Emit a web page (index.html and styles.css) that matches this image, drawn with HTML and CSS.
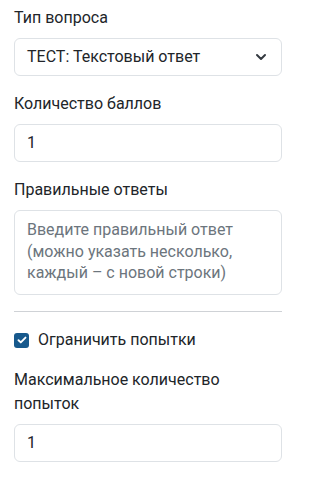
FILE: index.html
```html
<!DOCTYPE html>
<html lang="ru">
<head>
<meta charset="utf-8">
<link rel="stylesheet" href="styles.css">
</head>
<body>
<div class="panel">
  <div class="field">
    <label class="label">Тип вопроса</label>
    <div class="select">
      <span class="select-text">ТЕСТ: Текстовый ответ</span>
      <svg class="chevron" width="12" height="8" viewBox="0 0 12 8"><path d="M2 2l4 4 4-4" fill="none" stroke="#343a40" stroke-width="2" stroke-linecap="round" stroke-linejoin="round"/></svg>
    </div>
  </div>
  <div class="field">
    <label class="label">Количество баллов</label>
    <div class="input">1</div>
  </div>
  <div class="field">
    <label class="label">Правильные ответы</label>
    <div class="textarea">Введите правильный ответ (можно указать несколько, каждый – с новой строки)</div>
  </div>
  <hr class="divider">
  <div class="check-row">
    <span class="checkbox"><svg width="10" height="8" viewBox="0 0 10 8"><path d="M1.5 4.2l2.3 2.2L8.5 1.6" fill="none" stroke="#fff" stroke-width="1.9" stroke-linecap="round" stroke-linejoin="round"/></svg></span>
    <span class="check-label">Ограничить попытки</span>
  </div>
  <div class="field">
    <label class="label">Максимальное количество попыток</label>
    <div class="input">1</div>
  </div>
</div>
</body>
</html>
```
FILE: styles.css
```css
html, body {
  margin: 0;
  padding: 0;
  background: #ffffff;
}
body {
  font-family: Roboto, "Liberation Sans", sans-serif;
  font-size: 16px;
  color: #212529;
}
.panel {
  box-sizing: border-box;
  width: 296px;
  padding: 6px 14px 0 14px;
  display: flex;
  flex-direction: column;
}
.field {
  display: flex;
  flex-direction: column;
  gap: 8px;
  margin-bottom: 16px;
}
.label {
  line-height: 24px;
  color: #212529;
}
.select, .input {
  box-sizing: border-box;
  height: 38px;
  border: 1px solid #dee2e6;
  border-radius: 6px;
  padding: 0 12px;
  display: flex;
  align-items: center;
  line-height: 24px;
  color: #212529;
}
.select {
  justify-content: space-between;
  padding-right: 14px;
}
.chevron {
  display: block;
}
.textarea {
  box-sizing: border-box;
  height: 85px;
  border: 1px solid #dee2e6;
  border-radius: 6px;
  padding: 8px 12px;
  line-height: 21.5px;
  color: #6c757d;
}
.divider {
  border: 0;
  border-top: 1px solid #cfd2d6;
  margin: 0 0 16px 0;
  height: 0;
}
.check-row {
  display: flex;
  align-items: center;
  gap: 9px;
  line-height: 24px;
  margin-bottom: 16px;
}
.checkbox {
  width: 15px;
  height: 15px;
  border-radius: 3px;
  background: #17598c;
  display: flex;
  align-items: center;
  justify-content: center;
}
.checkbox svg {
  display: block;
}
```
